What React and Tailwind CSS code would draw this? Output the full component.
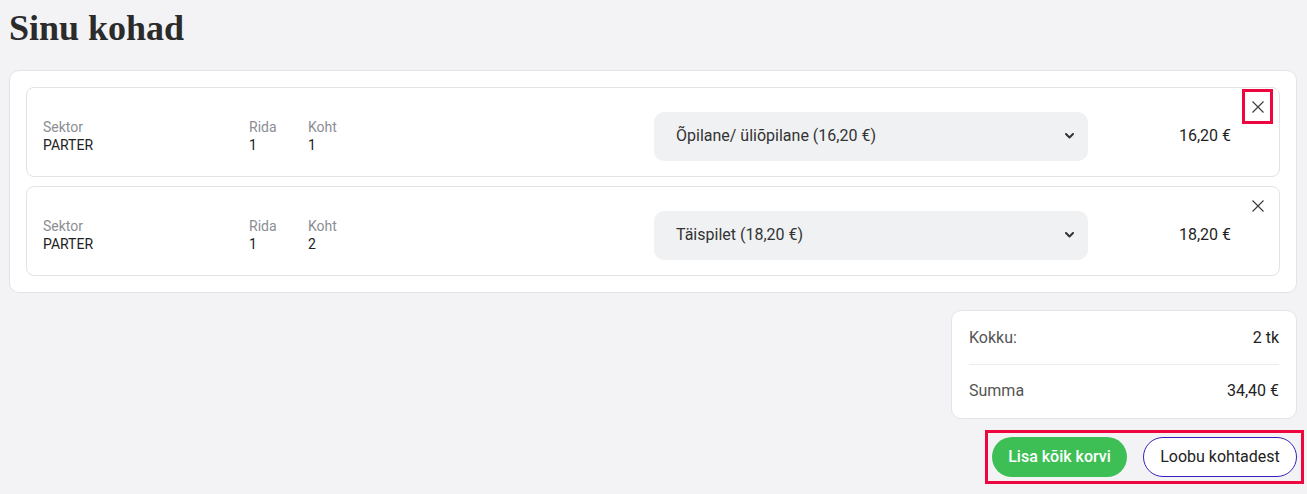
import React from 'react';

const seats = [
  { id: 1, sector: 'PARTER', row: '1', seat: '1', ticket: 'Õpilane/ üliõpilane (16,20 €)', price: '16,20 €', focused: true },
  { id: 2, sector: 'PARTER', row: '1', seat: '2', ticket: 'Täispilet (18,20 €)', price: '18,20 €', focused: false },
];

function CloseIcon() {
  return (
    <svg width="12" height="12" viewBox="0 0 12 12" fill="none" stroke="#3a3a3a" strokeWidth="1.1">
      <path d="M0.5 0.5 L11.5 11.5 M11.5 0.5 L0.5 11.5" />
    </svg>
  );
}

function Chevron() {
  return (
    <svg width="9" height="6" viewBox="0 0 9 6" fill="none" stroke="#333" strokeWidth="2" strokeLinecap="round" strokeLinejoin="round">
      <path d="M1 1 L4.5 4.5 L8 1" />
    </svg>
  );
}

function SeatRow({ s }) {
  return (
    <div className="relative flex items-center h-[90px] bg-white border border-[#e2e3e7] rounded-[8px] pl-[16px] pr-[48px] pt-[8px]">
      <div className="w-[206px] text-[14px] leading-[18px]">
        <div className="text-[#8b8e94]">Sektor</div>
        <div className="text-[#222]">{s.sector}</div>
      </div>
      <div className="w-[59px] text-[14px] leading-[18px]">
        <div className="text-[#8b8e94]">Rida</div>
        <div className="text-[#222]">{s.row}</div>
      </div>
      <div className="w-[60px] text-[14px] leading-[18px]">
        <div className="text-[#8b8e94]">Koht</div>
        <div className="text-[#222]">{s.seat}</div>
      </div>
      <div className="flex-1" />
      <div className="w-[434px] h-[49px] bg-[#f0f1f3] rounded-[10px] flex items-center justify-between pl-[22px] pr-[14px] text-[16px] text-[#333]">
        <span>{s.ticket}</span>
        <Chevron />
      </div>
      <div className="w-[143px] text-right text-[16px] text-[#1f1f1f]">{s.price}</div>
      <button
        className={`absolute top-[4px] right-[9px] w-[25px] h-[29px] flex items-center justify-center ${
          s.focused ? 'outline-[3px] outline-solid outline-[#f0063f]' : ''
        }`}
      >
        <CloseIcon />
      </button>
    </div>
  );
}

export default function App() {
  return (
    <div className="min-h-screen bg-[#f3f3f6] pl-[9px] pr-[10px] pt-[6px]" style={{ fontFamily: 'Roboto, "Noto Sans", sans-serif' }}>
      <h1
        className="text-[36px] leading-[40px] font-bold text-[#2b2b2b] h-[64px] pt-[2px]"
        style={{ fontFamily: '"Liberation Serif", "DejaVu Serif", serif' }}
      >
        Sinu kohad
      </h1>

      <div className="bg-white border border-[#e2e3e7] rounded-[10px] p-[16px] flex flex-col gap-[9px]">
        {seats.map(s => (
          <SeatRow key={s.id} s={s} />
        ))}
      </div>

      <div className="flex flex-col items-end mt-[17px]">
        <div className="w-[346px] h-[109px] bg-white border border-[#e2e3e7] rounded-[10px] px-[17px] flex flex-col text-[16px]">
          <div className="flex justify-between items-center h-[54px] border-b border-[#ececef]">
            <span className="text-[#555]">Kokku:</span>
            <span className="text-[#222]">2 tk</span>
          </div>
          <div className="flex justify-between items-center h-[52px]">
            <span className="text-[#555]">Summa</span>
            <span className="text-[#222]">34,40 €</span>
          </div>
        </div>

        <div className="flex gap-[16px] mt-[18px] outline-[3px] outline-solid outline-[#f0063f] outline-offset-[4px]">
          <button className="h-[40px] w-[135px] rounded-full bg-[#3dbf56] text-white text-[16px] font-medium">
            Lisa kõik korvi
          </button>
          <button className="h-[40px] w-[154px] rounded-full bg-white border border-[#3a1fbd] text-[#222] text-[16px]">
            Loobu kohtadest
          </button>
        </div>
      </div>
    </div>
  );
}
